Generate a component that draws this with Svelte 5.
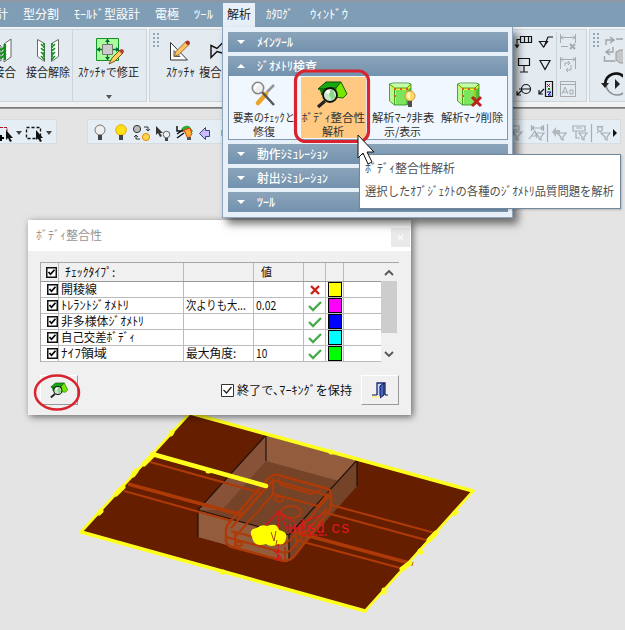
<script>
  const tabs = [
    { text: '計', w: 12, slot: 27, shift: -4 },
    { text: '型分割', w: 36, slot: 51 },
    { text: 'ﾓｰﾙﾄﾞ型設計', w: 66, slot: 81 },
    { text: '電極', w: 24, slot: 39 },
    { text: 'ﾂｰﾙ', w: 19, slot: 29 },
    { text: '解析', w: 24, slot: 32, active: true },
    { text: 'ｶﾀﾛｸﾞ', w: 27, slot: 55 },
    { text: 'ｳｨﾝﾄﾞｳ', w: 38, slot: 50 }
  ];
  const tools = [
    { icon: 'check', lines: [['要素のﾁｪｯｸと', 62], ['修復', 22]] },
    { icon: 'body', lines: [['ﾎﾞﾃﾞｨ整合性', 63], ['解析', 22]], hot: true },
    { icon: 'hide', lines: [['解析ﾏｰｸ非表', 62], ['示/表示', 37]] },
    { icon: 'delete', lines: [['解析ﾏｰｸ削除', 62]] }
  ];
  const rows = [
    { name: '開稜線', w: 36, cond: '', cw: 0, val: '', vw: 0, ok: false, color: '#ffff00' },
    { name: 'ﾄﾚﾗﾝﾄｼﾞｵﾒﾄﾘ', w: 68, cond: '次よりも大...', cw: 60, val: '0.02', vw: 20, ok: true, color: '#ff00ff' },
    { name: '非多様体ｼﾞｵﾒﾄﾘ', w: 83, cond: '', cw: 0, val: '', vw: 0, ok: true, color: '#0000ff' },
    { name: '自己交差ﾎﾞﾃﾞｨ', w: 74, cond: '', cw: 0, val: '', vw: 0, ok: true, color: '#00ffff' },
    { name: 'ﾅｲﾌ領域', w: 46, cond: '最大角度:', cw: 50, val: '10', vw: 11, ok: true, color: '#00ff00' }
  ];

  function fit(node, width) {
    const natural = node.offsetWidth;
    if (natural) node.style.transform = `scaleX(${width / natural})`;
  }
</script>

{#snippet label(text, w)}
  <span class="label" style="width:{w}px"><span class="ink" use:fit={w}>{text}</span></span>
{/snippet}

{#snippet cube()}
  <path d="M390.500 84l5 4v17l-5-4z" fill="#b9f98d" />
  <path d="M395.500 88h12.500v17h-12.500z" fill="#7de55b" />
  <path d="M408 88l4-4v16l-4 5z" fill="#55bf3c" />
  <path d="M390.500 84h21.500l-4 4h-12.500z" fill="#c8ff9f" />
  <path d="M392 86l4 3h12l4-3M396 89v15M408 89v8" fill="none" stroke="#f6ec27" stroke-width="2" />
  <path d="M390.500 84l3-1h15l3.500 1v16l-4 5h-12.500l-5-4zM390.500 84l5 4h12.500l4-4M395.500 88v17M408 88v17" fill="none" stroke="#259018" stroke-width=".8" />
  <path d="M395 88h2v2h-2zm6 0h2v2h-2zm6 0h2v2h-2zm-12 7h2v2h-2z" fill="#cf5c31" />
{/snippet}

{#snippet bodyIcon()}
  <path d="M318 89l8-7h15l-5 6z" fill="#16a811" stroke="#064d08" />
  <path d="M318 89q3 1 3 6l14 1 2-8z" fill="#087d08" />
  <path d="M336 88l5-6 6 12-4 4-8-1z" fill="#76e800" stroke="#176000" />
  <path d="M325 101l-7 6" stroke="#222" stroke-width="3.2" />
  <circle cx="330" cy="95" r="7" fill="#c7eac5" stroke="#111" stroke-width="1.8" />
  <path d="M327 91l6-1 2 7-3 3z" fill="#8cd589" /><circle cx="328" cy="92" r="2" fill="#fff" />
{/snippet}

{#snippet tick()}
  <svg class="checkbox" width="11" height="11" viewBox="0 0 11 11"><rect x=".75" y=".75" width="9.5" height="9.5" fill="#fff" stroke="#111" stroke-width="1.5" /><path d="M2.500 5l2 2.300 4-4.500" fill="none" stroke="#000" stroke-width="1.700" /></svg>
{/snippet}

<div class="app">
  <nav class="menubar">
    {#each tabs as tab}
      <div class="tab" class:active={tab.active} style="width:{tab.slot}px;margin-left:{tab.shift ?? 0}px">{@render label(tab.text, tab.w)}</div>
    {/each}
  </nav>

  <section class="ribbon">
    <div class="panel first">
      <div class="command sew">
        <svg width="16" height="25" viewBox="0 36 16 25"><path d="M0 41l4 3v15l-4-3M14 37l-7 5v18l7-5z" fill="#fff" stroke="#666" /><path d="M1 42v16M8 42v16" stroke="#138c20" stroke-width="2" /><path d="M-1 44l5 4 5-4m-10 4l5 4 5-4m-10 4l5 4 5-4" fill="none" stroke="#138c20" stroke-width="1.800" /></svg>
        {@render label('接合', 23)}
      </div>
      <div class="command unsew">
        <svg width="24" height="25" viewBox="37 36 24 25"><path d="M38.500 37.500l7 4v18l-7-5zM59.500 37.500l-7 4v18l7-5z" fill="#fff" stroke="#666" /><path d="M45 41v18M53 41v18" stroke="#138c20" stroke-width="1.600" stroke-dasharray="2 1" /><path d="M42 42l3 3m-3 1l3 3m-3 1l3 3m-3 1l3 3M56 42l-3 3m3 1l-3 3m3 1l-3 3m3 1l-3 3" stroke="#138c20" stroke-width="1.600" /></svg>
        {@render label('接合解除', 44)}
      </div>
      <div class="command modify">
        <svg width="30" height="29" viewBox="94 36 30 29"><path d="M95.500 38.500h22v22h-22z" fill="#a9ff9c" stroke="#16922a" /><path d="M106.500 39v5M106.500 55v5M96 49.500h5M112 49.500h6" stroke="#073" stroke-width="1.300" /><path d="M104 42l2.500-3 2.500 3zM104 57l2.500 3 2.500-3zM99 47l-3 2.500 3 2.500zM115 47l3 2.500-3 2.500z" fill="#063" /><path d="M101.500 44.500h10v10h-10z" fill="#ccc" stroke="#777" /><path d="M108 64l3-6 8-8 3 3-8 8z" fill="#ffd05b" stroke="#775322" /><path d="M118 51l2-2q3 0 3 3l-2 2z" fill="#b83f36" /></svg>
        {@render label('ｽｹｯﾁｬで修正', 61)}
        <span class="caret"></span>
      </div>
    </div>
    <div class="panel second">
      <div class="grip">{#each Array(8) as _}<i></i>{/each}</div>
      <div class="command sketch">
        <svg width="24" height="24" viewBox="169 38 24 24"><path d="M171.500 42v17.500h17z" fill="#fff" stroke="#333" /><path d="M175 50v6h6z" fill="none" stroke="#555" /><path d="M175 56l2-5 10-10 3 3-10 10z" fill="#ffc461" stroke="#986b28" /><path d="M186 42l2-2q3 0 3 3l-2 2z" fill="#ad302e" /></svg>
        {@render label('ｽｹｯﾁｬ', 29)}
      </div>
      <div class="command composite">
        <svg width="24" height="24" viewBox="210 38 24 24"><path d="M212 57V45l6 3 7-7v12l-7-2z" fill="#dce2e8" stroke="#111" stroke-width="1.400" /></svg>
        {@render label('複合曲', 34)}
      </div>
    </div>
    <div class="panel dims">
      <svg width="80" height="72" viewBox="505 29 80 72">
        <g fill="none" stroke="#151515" stroke-width="1.200">
          <path d="M520.500 35.500h11v6h-11zM524.500 35.500v6M528.500 35.500v6M520 38.500h-3v7m-2-2l2 3 2-3" />
          <path d="M518.500 57.500h11v7h-11zM524 65v6m-4 0h8" />
          <circle cx="526" cy="88" r="4.500" /><path d="M519 88h12M522 89l-5 5m0-4v4h4" />
          <path d="M539.500 40.500h8l-4 5.500zM544 46l4-10h5M540 59.500h10l-5 9z" />
          <path d="M545.500 80.500h7v15h-7zM544 88l-5 5m0-4v4h4" />
        </g>
        <path d="M547 83l3 3m0-3l-3 3" stroke="#e00" /><path d="M549 87v2" stroke="#080" stroke-width="2" /><path d="M547 91h4l-3 3h3" fill="none" stroke="#009" />
        <path d="M556.500 31v64" stroke="#cbd2d8" />
        <g stroke="#a7abae" fill="none"><path d="M560.500 33v9m15-9v9M561 36.500h14m-12-2l-2 2 2 2m10-4l2 2-2 2M561 45.500h7M560.500 56v12m15-12v12M561 58.500h14m-12-2l-2 2 2 2m10-4l2 2-2 2M565 65v-3h5l-2-2m2 2l-2 2M571 64v5h-5l2-2m-2 2l2 2M560.500 80.500h15v15h-15zM560 83.500h16M562 93l3-7 3 7m-5-2h4M570 89h3v4h-3z" /><path d="M570 43l5 5m0-5l-5 5" stroke-width="2" /></g>
      </svg>
    </div>
    <div class="panel right">
      <div class="grip">{#each Array(8) as _}<i></i>{/each}</div>
      <svg width="22" height="66" viewBox="604 33 22 66"><g fill="none" stroke="#9fa3a7" stroke-width="1.400"><path d="M609 45v-5h7m-3-3l4 3-4 3M619 39h8M616 47v5h-6m3-3l-4 3 4 3M607.500 56v5h11" /></g><path d="M619 52l4-2h5v13h-5l-4-3z" fill="#c4c6c8" stroke="#999" /><circle cx="620" cy="84" r="11" fill="none" stroke="#8e9192" stroke-width="1.500" /><path d="M608 84a11 11 0 0 1 19-7" fill="none" stroke="#111" stroke-width="2.500" /><path d="M604 83h8l-4 5zM618 79v10l5-5z" fill="#222" /></svg>
    </div>
  </section>
  <div class="rule"></div>
  <section class="tools">
    <div class="strip selection">
      <svg width="56" height="24" viewBox="0 120 56 24"><path d="M0 127.500h7v8" fill="none" stroke="#b11327" stroke-dasharray="3 1" /><path d="M1 135v6m-3-3h6" stroke="#000" stroke-width="2" /><path d="M6 130v10l2-2 2 4 2-1-2-3h3zM36 130v10l2-2 2 4 2-1-2-3h3z" fill="#111" /><path d="M26.500 127.500h14v11h-14z" fill="none" stroke="#111" stroke-width="1.300" stroke-dasharray="3 2" /><path d="M16 131h6l-3 4zM46 131h6l-3 4z" fill="#444" /></svg>
    </div>
    <div class="strip bulbs">
      <svg width="138" height="24" viewBox="88 120 138 24">
        <circle cx="100" cy="130" r="5" fill="#eee" stroke="#777" /><path d="M98 135h4v5h-4z" fill="#444" /><circle cx="121" cy="130" r="5.300" fill="#ffe113" stroke="#efa500" /><path d="M119 135h4v5h-4z" fill="#444" />
        <circle cx="137" cy="129" r="3.600" fill="#bbb" stroke="#333" /><circle cx="146" cy="137" r="3.600" fill="#ffd44f" stroke="#e58c00" /><path d="M144 127h4v4m-2-2l2 2 2-2M140 139h-4v-4m-2 2l2-2 2 2" fill="none" stroke="#333" />
        <path d="M156 126v9l2-2 2 4 2-1-2-3h3z" fill="#333" /><circle cx="166.500" cy="134.500" r="3.300" fill="#eee" stroke="#666" /><path d="M165 138h3v3h-3z" fill="#444" />
        <path d="M181 130q2-5 8-4l4 5-4 4z" fill="#2eab34" /><path d="M184 130l6-2 2 6-4 5z" fill="#ffb12f" stroke="#e13b16" /><path d="M177 126v5h6m-6 7l7-5m-7 1l6-4" stroke="#111" stroke-width="1.500" fill="none" /><path d="M187 137h4v3h-4z" fill="#555" />
        <path d="M199.500 133.500l6-6v3h4v6h-4v3z" fill="#c9bdff" stroke="#424170" /><path d="M221 130h5v6h-5z" fill="#aaa" />
      </svg>
      <svg class="filters" width="115" height="24" viewBox="506 120 115 24"><g fill="none" stroke="#a7adb1" stroke-width="1.200">
        <path d="M512 126h8v4h-8zM514 130v6M514 132h9l-4 4v4l-2-1v-3zM532.500 125v6m12-6v6M533 128h11m-9-2l-2 2 2 2m7-4l2 2-2 2M530 139l6-8 2 7m-6-2h5M537 133h8l-3 4v3l-2-1v-2zM558 133h9l-3 4v3l-2-1v-2zM574 126h12v5h-12zM577 128h6M577 131v7h4M580 133h8l-3 4v3l-2-1v-2zM602 133h9l-3 4v3l-2-1v-2z" /><circle cx="601" cy="129" r="2.300" /><path d="M598 126l1 1m5-1l-1 1m-5 6l1-1M548.500 124v18M592.500 124v18" /></g><path d="M553 132l4-5v3h4v4h-4v3z" fill="#b3b8bc" /><path d="M614 129l4 4-4 4z" fill="#111" /></svg>
    </div>
  </section>

  <svg class="model" width="625" height="215" viewBox="0 415 625 215">
    <path d="M81 532L190 412l283 78-108 121z" fill="#661e00" />
    <path d="M198 510l68-75 91 25v26l-68 76-91-25z" fill="#744328" />
    <path d="M266 435l91 25v26l-91-25zM198 510l91 25v27l-91-25z" fill="#935c3d" />
    <path d="M198 510l68-75v26l-44 49z" fill="#875238" />
    <path d="M289 535l68-75v26l-68 76z" fill="#744328" />
    <path d="M198 537v-27l68-75v26m91 25v-26l-68 75v27M198 510l91 25M266 435l91 25" fill="none" stroke="#21100b" stroke-width="1.200" />
    <g fill="none" stroke="#ae3a08" stroke-width="2">
      <path d="M150 462l112 31M124 491l108 30M331 505l104 28M323 512l103 28M296 540l108 29" /><path d="M128 484l114 31M298 533l115 31" stroke-width="3.500" />
      <path d="M228 524l39-44q5-6 11-5l50 14q4 2 3 7v12l-35 46q-5 7-12 7l-52-14q-7-2-6-9v-9z" stroke-width="2.500" />
      <path d="M231 528l39-44 3-4v14l-38 43v12M273 480l56 16M273 494l45 12 10-13M226 537l59 16q5-1 9-7l33-38M285 547v14M296 535v12M330 495l-38 43q-7 7-12 6l-49-13M238 519l35-39M235 531v9" />
      <ellipse cx="279" cy="499" rx="4" ry="2.500" /><ellipse cx="291" cy="512" rx="10" ry="6" /><ellipse cx="239" cy="544" rx="3" ry="2" /><path d="M278 478l3 7 30 9 10-4" />
    </g>
    <g fill="none" stroke="#dc1518" stroke-width="1.400"><path d="M266 525l13-14 8 18M279 512l-1 49M277 511l18 11M262 526l18 5M274 550l7 8-6 2M289 528h22m-10 7h26M301 523l20-8M303 519v13" stroke-dasharray="5 1" /></g>
    <g class="axis"><text x="287" y="533" textLength="38" lengthAdjust="spacingAndGlyphs">ucsd</text><text x="331" y="533" textLength="19" lengthAdjust="spacingAndGlyphs">cs</text></g>
    <g stroke="#ffff1d" fill="none" stroke-linecap="round" stroke-linejoin="round"><path d="M190 413l283 78M81 532l284 79" stroke-width="3.500" /><path d="M81 532L190 413M473 491L365 611" stroke-width="2.600" /><path d="M152 454l114 32" stroke-width="4.500" /><path d="M154 454l-10 10M136 471l-3 4M123 487l-7 7M101 511l-2 2M172 432l-1 2M436 533l-7 7M410 563l-8 6M384 590v2M420 551l1 1M455 513l1-1M222 572h1M331 452h1M208 471h1" stroke-width="5" /></g>
    <path d="M252 537q-4-8 5-9 4-4 10-2 10-4 12 4 9 2 7 8-1 8-8 6-7 4-12 0-12 4-14-7z" fill="#ff0" />
    <path d="M271 532l3 9 2-10M277 540l-2 9" fill="none" stroke="#a44e08" />
  </svg>

  <section class="dialog">
    <header><span>{@render label('ﾎﾞﾃﾞｨ整合性', 66)}</span><svg width="19" height="19" viewBox="0 0 19 19"><rect width="19" height="19" fill="#e9e9e9" /><path d="M7 7l5 5m0-5l-5 5" stroke="#fafafa" stroke-width="1.400" /></svg></header>
    <div class="content">
      <div class="list">
        <div class="grid">
          <div class="row head"><div class="cb">{@render tick()}</div><div class="name">{@render label('ﾁｪｯｸﾀｲﾌﾟ:', 50)}</div><div class="condition"></div><div class="value">{@render label('値', 11)}</div><div class="state"></div><div class="swatch"></div><div class="rest"></div></div>
          {#each rows as row}
            <div class="row">
              <div class="cb">{@render tick()}</div>
              <div class="name">{@render label(row.name, row.w)}</div>
              <div class="condition">{#if row.cond}{@render label(row.cond, row.cw)}{/if}</div>
              <div class="value">{#if row.val}{@render label(row.val, row.vw)}{/if}</div>
              <div class="state"><svg width="14" height="12" viewBox="0 0 14 12">{#if row.ok}<path d="M1 6l4 4 8-8" fill="none" stroke="#44a946" stroke-width="2.300" />{:else}<path d="M3 2l8 8m0-8l-8 8" stroke="#cf2018" stroke-width="2.400" />{/if}</svg></div>
              <div class="swatch"><i style="background:{row.color}"></i></div><div class="rest"></div>
            </div>
          {/each}
        </div>
        <div class="scroll"><svg width="16" height="100" viewBox="0 0 16 100"><path d="M0 18h16v52H0z" fill="#cdcdcd" /><path d="M4 12l4-4 4 4M4 89l4 4 4-4" fill="none" stroke="#555" stroke-width="1.800" /></svg></div>
      </div>
      <div class="actions">
        <button aria-label="解析"><svg width="20" height="21" viewBox="315 77 34 36">{@render bodyIcon()}</svg></button>
        <div class="keep"><svg width="13" height="13" viewBox="0 0 13 13"><path d="M.5.5h12v12H.5z" fill="#fff" stroke="#333" /><path d="M2.500 6l3 3 5-6" fill="none" stroke="#222" stroke-width="1.300" /></svg>{@render label('終了で､ﾏｰｷﾝｸﾞを保持', 115)}</div>
        <button aria-label="終了"><svg width="18" height="19" viewBox="0 0 18 19"><path d="M6 14V2h8v12" fill="#cbd5f5" stroke="#172875" stroke-width="1.300" /><path d="M9 5l4-3v12l-4 3z" fill="#4864bd" stroke="#081951" /><path d="M1 15h8v2H1z" fill="#ffef9b" /><path d="M1 14h5M14 14h3" stroke="#081951" /></svg></button>
      </div>
    </div>
  </section>

  <section class="menu">
    <div class="bar"><b></b>{@render label('ﾒｲﾝﾂｰﾙ', 36)}</div>
    <div class="group">
      <div class="bar"><b class="up"></b>{@render label('ｼﾞｵﾒﾄﾘ検査', 60)}</div>
      <div class="items">
        {#each tools as tool}
          <div class="item" class:hot={tool.hot}>
            {#if tool.icon === 'check'}
              <svg width="36" height="30" viewBox="244 80 36 30"><path d="M272 85l-7 7" stroke="#919596" stroke-width="2.500" /><path d="M264 94l-8 9" stroke="#eba52a" stroke-width="4.500" stroke-linecap="round" /><path d="M260 92l12 13" stroke="#555" stroke-width="2.500" /><circle cx="256" cy="88" r="5.700" fill="#eee" stroke="#888" stroke-width="1.600" /><path d="M253 89q0-5 4-4" stroke="#fff" fill="none" stroke-width="2" /></svg>
            {:else if tool.icon === 'body'}
              <svg width="36" height="30" viewBox="315 80 36 30">{@render bodyIcon()}</svg>
            {:else if tool.icon === 'hide'}
              <svg width="36" height="30" viewBox="386 80 36 30">{@render cube()}<circle cx="411" cy="96" r="5" fill="#ffda67" stroke="#c59b46" /><path d="M408 96a4 4 0 0 1 3-4v8z" fill="#fff4cd" /><path d="M409 101h4v6h-4z" fill="#505050" /></svg>
            {:else}
              <svg width="36" height="30" viewBox="387 80 36 30">{@render cube()}<path d="M405 97l9 9m0-9l-9 9" stroke="#bd201c" stroke-width="3" /></svg>
            {/if}
            {#each tool.lines as [text, w]}<div class="line">{@render label(text, w)}</div>{/each}
          </div>
        {/each}
      </div>
    </div>
    <div class="bar"><b></b>{@render label('動作ｼﾐｭﾚｰｼｮﾝ', 71)}</div>
    <div class="bar"><b></b>{@render label('射出ｼﾐｭﾚｰｼｮﾝ', 71)}</div>
    <div class="bar"><b></b>{@render label('ﾂｰﾙ', 18)}</div>
  </section>
  <aside class="tooltip"><div>{@render label('ﾎﾞﾃﾞｨ整合性解析', 90)}</div><div>{@render label('選択したｵﾌﾞｼﾞｪｸﾄの各種のｼﾞｵﾒﾄﾘ品質問題を解析', 249)}</div></aside>
  <svg class="overlay" width="625" height="630" viewBox="0 0 625 630"><rect x="295.500" y="71" width="73" height="70.500" rx="10" fill="none" stroke="#d9232e" stroke-width="3.200" /><ellipse cx="57" cy="392.500" rx="22" ry="17" fill="none" stroke="#d9232e" stroke-width="2.500" /><path d="M358 135v23l5-5 5 11 4-2-5-10h7z" fill="#fff" stroke="#111" /></svg>
</div>

<style>
  .app { position: relative; width: 625px; height: 630px; overflow: hidden; background: #e4e4e4; font: 12px/14px "Noto Sans CJK JP", "Noto Sans", sans-serif; color: #262626; }
  svg { display: block; flex-shrink: 0; }
  .label { display: block; flex-shrink: 0; height: 14px; line-height: 14px; white-space: nowrap; text-align: left; }
  .ink { display: block; width: max-content; height: 14px; transform-origin: left; }
  .menubar { height: 27px; box-sizing: border-box; display: flex; background: #7f9eb5; border-top: 2px solid #8d98a2; color: #fff; }
  .tab { height: 25px; box-sizing: border-box; padding-top: 5px; flex-shrink: 0; }
  .tab.active { background: #e7eff8; color: #222; margin-top: 1px; padding: 4px 0 0 4px; }
  .tab.active + .tab { padding-left: 11px; }
  .ribbon { height: 80px; box-sizing: border-box; padding: 2px 0 5px; background: #f0f2f3; display: flex; }
  .panel { box-sizing: border-box; height: 73px; flex-shrink: 0; display: flex; background: #e3eaf0; border: 1px solid #cdd4da; }
  .panel.first { width: 147px; border-left: 0; }
  .panel.second { width: 355px; margin-left: 2px; padding-left: 3px; }
  .panel.dims { width: 83px; }
  .panel.right { width: 38px; margin-left: 2px; padding-left: 3px; }
  .right > svg { margin-top: 3px; }
  .command { display: flex; flex-direction: column; align-items: center; flex-shrink: 0; padding-top: 6px; box-sizing: border-box; }
  .command svg { height: 29px; }
  .sew { width: 23px; margin-left: -7px; }
  .unsew { width: 57px; border-right: 1px solid #cdd4da; padding-left: 7px; }
  .modify { width: 71px; }
  .modify svg { margin-left: 3px; }
  .grip { width: 8px; margin-top: 3px; display: grid; grid-template-columns: 2px 2px; grid-template-rows: repeat(4, 2px); gap: 2px; }
  .grip i { background: #91a9ba; }
  .sketch { width: 38px; }
  .sketch .label, .sketch svg { margin-left: 0; }
  .composite { width: 39px; align-items: flex-start; }
  .composite svg { margin-left: 10px; }
  .caret, .bar b { width: 0; height: 0; border-left: 3px solid transparent; border-right: 3px solid transparent; border-top: 4px solid #555; }
  .caret { margin-top: 16px; }
  .rule { height: 2px; background: linear-gradient(#686868, #aaa); }
  .tools { display: flex; height: 26px; margin-top: 10px; gap: 30px; }
  .strip { box-sizing: border-box; height: 25px; background: #e5edf5; border: 1px solid #d7dce0; flex-shrink: 0; }
  .selection { width: 57px; border-left: 0; }
  .bulbs { width: 534px; display: flex; justify-content: space-between; }
  .model { position: absolute; left: 0; top: 415px; }
  .axis { fill: #df171c; font: 16px "Liberation Mono", monospace; }
  .menu { position: absolute; left: 222px; top: 27px; width: 291px; height: 191px; box-sizing: border-box; padding: 5px 4px 0 5px; display: flex; flex-direction: column; gap: 4px; background: #e7eff8; border: solid #8ca5ba; border-width: 0 1px 1px; box-shadow: 5px 6px 8px #0008; }
  .bar { height: 20px; box-sizing: border-box; padding: 0 0 0 9px; display: flex; align-items: center; flex-shrink: 0; color: #fff; font-weight: 500; background: linear-gradient(#8ba4ba, #7392ae); }
  .bar b { border-top-color: #fff; border-left-width: 4px; border-right-width: 4px; margin-right: 12px; }
  .bar b.up { border-top: 0; border-bottom: 4px solid #fff; }
  .group { height: 84px; flex-shrink: 0; }
  .items { height: 64px; box-sizing: border-box; border: 1px solid #8199ae; border-top: 0; display: flex; background: #f0f7ff; }
  .item { width: 70px; box-sizing: border-box; padding-top: 4px; display: flex; flex-direction: column; align-items: center; font-size: 11.5px; color: #303030; }
  .item.hot { width: 66px; margin: 1px 2px; padding-top: 3px; background: #ffc982; }
  .line { height: 14px; }
  .tooltip { position: absolute; left: 359px; top: 154px; width: 262px; height: 55px; box-sizing: border-box; padding: 6px 5px; background: #fff; border: 1px solid #71879b; color: #505050; box-shadow: 1px 1px 2px #0003; }
  .tooltip div { height: 23px; }
  .dialog { position: absolute; left: 28px; top: 220px; width: 383px; height: 195px; background: #f0f0f0; box-shadow: 2px 2px 7px #0008; color: #111; }
  .dialog header { height: 31px; box-sizing: border-box; padding: 8px 1px 0 8px; background: #fff; color: #969696; display: flex; justify-content: space-between; }
  .content { padding: 11px 12px; }
  .list { height: 100px; overflow: hidden; display: flex; border: solid #a7a7a7; border-width: 1px 0 0 1px; box-sizing: border-box; }
  .grid { width: 340px; height: 99px; overflow: hidden; }
  .row { height: 16px; box-sizing: border-box; display: flex; background: #fff; border-bottom: 1px solid #bbb; }
  .row > div { flex-shrink: 0; box-sizing: border-box; border-right: 1px solid #bbb; height: 100%; padding-left: 2px; }
  .row.head { height: 19px; background: #f0f0f0; border-bottom-color: #999; }
  .row.head > div { padding-top: 2px; }
  .row .cb { width: 18px; padding-left: 6px; padding-top: 2px; }
  .row.head .cb { padding: 4px 0 0 5px; }
  .row .name { width: 125px; }
  .row.head .name { padding-left: 6px; }
  .row .condition { width: 70px; }
  .row .value { width: 50px; }
  .row.head .value { padding-left: 7px; }
  .row .state { width: 22px; padding: 2px 4px; }
  .row .swatch { width: 18px; }
  .swatch i { display: block; width: 12px; height: 13px; border: 1px solid #000; }
  .row .rest { width: 37px; border: 0; }
  .scroll { width: 17px; background: #f0f0f0; }
  .actions { display: flex; height: 30px; margin-top: 13px; align-items: center; }
  button { width: 38px; height: 30px; padding: 0; flex-shrink: 0; display: flex; align-items: center; justify-content: center; background: #f0f0f0; border: 1px solid; border-color: #fff #999 #999 #fff; }
  .keep { display: flex; align-items: center; gap: 3px; margin: 0 9px 0 143px; flex-shrink: 0; }
  .overlay { position: absolute; left: 0; top: 0; pointer-events: none; }
</style>
